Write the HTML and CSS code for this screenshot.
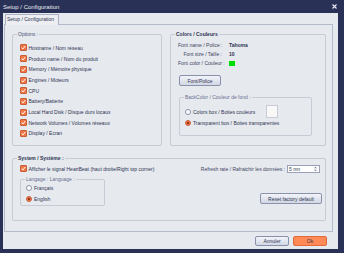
FILE: index.html
```html
<!DOCTYPE html>
<html>
<head>
<meta charset="utf-8">
<link rel="stylesheet" href="styles.css">
</head>
<body>
<div class="window">
  <div class="titlebar">
    <span class="title">Setup / Configuration</span>
    <svg class="close" width="5" height="5" viewBox="0 0 5 5"><path d="M0.5 0.5 L4.5 4.5 M4.5 0.5 L0.5 4.5" stroke="#e8eaf2" stroke-width="1.1"/></svg>
  </div>
  <div class="client">
    <div class="tabs"><div class="tab">Setup / Configuration</div></div>
    <div class="panel">
      <div class="top-row">
        <div class="group options">
          <span class="legend">Options :</span>
          <ul class="checklist">
            <li class="check-row"><span class="checkbox"><svg viewBox="0 0 7 7"><path d="M1.6 3.6 L2.9 4.9 L5.4 2" fill="none" stroke="#fff" stroke-width="1"/></svg></span>Hostname / Nom réseau</li>
            <li class="check-row"><span class="checkbox"><svg viewBox="0 0 7 7"><path d="M1.6 3.6 L2.9 4.9 L5.4 2" fill="none" stroke="#fff" stroke-width="1"/></svg></span>Product name / Nom du produit</li>
            <li class="check-row"><span class="checkbox"><svg viewBox="0 0 7 7"><path d="M1.6 3.6 L2.9 4.9 L5.4 2" fill="none" stroke="#fff" stroke-width="1"/></svg></span>Memory / Mémoire physique</li>
            <li class="check-row"><span class="checkbox"><svg viewBox="0 0 7 7"><path d="M1.6 3.6 L2.9 4.9 L5.4 2" fill="none" stroke="#fff" stroke-width="1"/></svg></span>Engines / Moteurs</li>
            <li class="check-row"><span class="checkbox"><svg viewBox="0 0 7 7"><path d="M1.6 3.6 L2.9 4.9 L5.4 2" fill="none" stroke="#fff" stroke-width="1"/></svg></span>CPU</li>
            <li class="check-row"><span class="checkbox"><svg viewBox="0 0 7 7"><path d="M1.6 3.6 L2.9 4.9 L5.4 2" fill="none" stroke="#fff" stroke-width="1"/></svg></span>Battery/Batterie</li>
            <li class="check-row"><span class="checkbox"><svg viewBox="0 0 7 7"><path d="M1.6 3.6 L2.9 4.9 L5.4 2" fill="none" stroke="#fff" stroke-width="1"/></svg></span>Local Hard Disk / Disque durs locaux</li>
            <li class="check-row"><span class="checkbox"><svg viewBox="0 0 7 7"><path d="M1.6 3.6 L2.9 4.9 L5.4 2" fill="none" stroke="#fff" stroke-width="1"/></svg></span>Network Volumes / Volumes réseaux</li>
            <li class="check-row"><span class="checkbox"><svg viewBox="0 0 7 7"><path d="M1.6 3.6 L2.9 4.9 L5.4 2" fill="none" stroke="#fff" stroke-width="1"/></svg></span>Display / Ecran</li>
          </ul>
        </div>
        <div class="group colors">
          <span class="legend bold">Colors / Couleurs</span>
          <div class="font-info">
            <span class="lbl">Font name / Police :</span><span class="val">Tahoma</span>
            <span class="lbl">Font size / Taille :</span><span class="val">10</span>
            <span class="lbl">Font color / Couleur :</span><span class="val"><span class="swatch"></span></span>
          </div>
          <button class="btn font-btn">Font/Police</button>
          <div class="group backcolor">
            <span class="legend light">BackColor / Couleur de fond :</span>
            <div class="radio-row"><span class="radio"></span><span class="rtext">Colors box / Boites couleurs</span><span class="color-box"></span></div>
            <div class="radio-row"><span class="radio checked"></span><span>Transparent box / Boites transparentes</span></div>
          </div>
        </div>
      </div>
      <div class="group system">
        <span class="legend bold">System / Système :</span>
        <div class="sys-left">
          <div class="check-row"><span class="checkbox"><svg viewBox="0 0 7 7"><path d="M1.6 3.6 L2.9 4.9 L5.4 2" fill="none" stroke="#fff" stroke-width="1"/></svg></span>Afficher le signal HeartBeat (haut droite/Right top corner)</div>
          <div class="group language">
            <span class="legend light">Langage : Language :</span>
            <div class="radio-row"><span class="radio"></span><span>Français</span></div>
            <div class="radio-row"><span class="radio checked"></span><span>English</span></div>
          </div>
        </div>
        <div class="sys-right">
          <div class="refresh-row">
            <span>Refresh rate / Rafraichir les données :</span>
            <span class="spinner"><span>5 mn</span><svg width="3" height="6" viewBox="0 0 3 6"><path d="M0 2.2 L1.5 0.7 L3 2.2 Z M0 3.8 L1.5 5.3 L3 3.8 Z" fill="#7a8098"/></svg></span>
          </div>
          <button class="btn reset-btn">Reset factory default</button>
        </div>
      </div>
    </div>
    <div class="footer">
      <button class="btn foot-btn">Annuler</button>
      <button class="btn foot-btn ok">Ok</button>
    </div>
  </div>
</div>
</body>
</html>
```

FILE: styles.css
```css
* {
  box-sizing: border-box;
  margin: 0;
  padding: 0;
}

body {
  width: 344px;
  height: 253px;
  overflow: hidden;
  font-family: "Liberation Sans", Arial, sans-serif;
  font-size: 5px;
  color: #2e3452;
}

.window {
  width: 344px;
  height: 253px;
  background: #2a3156;
  display: flex;
  flex-direction: column;
  padding: 0 6px 4px 3px;
}

.titlebar {
  height: 13px;
  display: flex;
  align-items: center;
  justify-content: space-between;
  color: #e8eaf2;
  font-size: 6px;
  padding-right: 1px;
}

.close {
  display: block;
  margin-top: -1px;
}

.client {
  flex: 1;
  background: #e6e9ee;
  padding: 1px 5px 0 1px;
  display: flex;
  flex-direction: column;
}

.tabs {
  display: flex;
  padding-left: 1px;
  height: 10px;
}

.tab {
  width: 54px;
  height: 11px;
  border: 1px solid #a9b1c3;
  border-bottom: none;
  border-radius: 1px 1px 0 0;
  background: #eceef2;
  padding-left: 1px;
  line-height: 9px;
  position: relative;
  z-index: 1;
}

.panel {
  height: 208px;
  border: 1px solid #b3bac9;
  padding: 9px 6px 0 7px;
}

.top-row {
  display: flex;
  gap: 8px;
  height: 112px;
}

.group {
  position: relative;
  border: 1px solid #c6cbd6;
  border-radius: 2px;
}

.legend {
  position: absolute;
  top: -4px;
  left: 4px;
  line-height: 7px;
  padding: 0 1px;
  background: #e6e9ee;
  color: #4a5272;
  white-space: nowrap;
}

.legend.bold {
  font-weight: bold;
  color: #2e3452;
}

.legend.light {
  color: #6a7090;
}

.options {
  width: 150px;
  height: 112px;
  padding: 7.6px 0 0 7px;
}

.checklist {
  list-style: none;
}

.check-row {
  display: flex;
  align-items: center;
  gap: 1.5px;
  height: 10.7px;
  white-space: nowrap;
}

.checkbox {
  width: 7px;
  height: 7px;
  background: #f07848;
  border: 1px solid #c85c34;
  border-radius: 1px;
  display: flex;
  flex-shrink: 0;
}

.checkbox svg {
  width: 7px;
  height: 7px;
  margin: -1px;
}

.colors {
  width: 156px;
  height: 112px;
  display: flex;
  flex-direction: column;
  align-items: flex-start;
  padding: 5.5px 0 0 7px;
}

.font-info {
  display: grid;
  grid-template-columns: 44px auto;
  column-gap: 7px;
  grid-auto-rows: 9px;
  align-items: center;
}

.lbl {
  text-align: right;
  white-space: nowrap;
  color: #3e4462;
}

.val {
  font-weight: bold;
  display: flex;
  align-items: center;
}

.swatch {
  width: 6px;
  height: 5px;
  background: #00dd00;
}

.btn {
  font: inherit;
  color: #2e3452;
  border: 1px solid #8a91aa;
  border-radius: 2px;
  background: linear-gradient(#f2f4f9, #d2d7e4);
}

.font-btn {
  width: 42px;
  height: 11px;
  margin: 7.5px 0 0 1px;
}

.backcolor {
  width: 133px;
  height: 39px;
  margin: 11px 0 0 1px;
  padding: 8.5px 0 0 5px;
}

.radio-row {
  display: flex;
  align-items: center;
  gap: 2px;
  height: 11px;
  white-space: nowrap;
}

.radio {
  width: 6px;
  height: 6px;
  border-radius: 50%;
  border: 1px solid #8a90a6;
  background: #fff;
  flex-shrink: 0;
}

.radio.checked {
  border-color: #c85c34;
  background: radial-gradient(circle, #9a3418 0 1.2px, #f07848 1.6px);
}

.rtext {
  width: 71px;
}

.color-box {
  width: 12px;
  height: 13px;
  background: #f8f8f8;
  border: 1px solid #c8ccd6;
  margin: -3px 0 -1px;
}

.system {
  margin-top: 12px;
  height: 63px;
  display: flex;
  justify-content: space-between;
}

.sys-left {
  padding: 4.5px 0 0 7px;
}

.language {
  width: 85px;
  height: 27px;
  margin-top: 4.5px;
  padding: 2.5px 0 0 5px;
}

.sys-right {
  display: flex;
  flex-direction: column;
  align-items: flex-end;
  padding: 6px 3px 0 0;
}

.refresh-row {
  display: flex;
  align-items: center;
  gap: 2px;
  margin-right: 2px;
  white-space: nowrap;
  color: #3e4462;
}

.spinner {
  width: 33px;
  height: 8px;
  background: #fff;
  border: 1px solid #9aa0b6;
  display: flex;
  align-items: center;
  justify-content: space-between;
  padding: 0 2px 0 1px;
  color: #2e3452;
}

.reset-btn {
  width: 62px;
  height: 11px;
  margin-top: 20px;
}

.footer {
  display: flex;
  justify-content: flex-end;
  gap: 4px;
  padding: 4px 6px 0 0;
}

.foot-btn {
  width: 34px;
  height: 10px;
}

.ok {
  background: #ff8a58;
  border-color: #e06a3e;
}
```
